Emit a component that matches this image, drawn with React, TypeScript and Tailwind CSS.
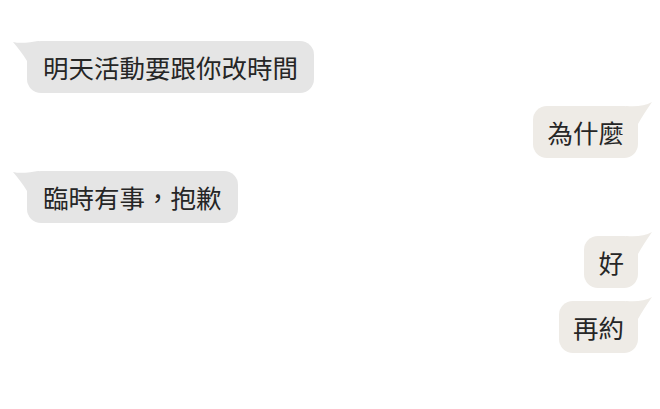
import React from 'react';

interface Message {
  id: number;
  text: string;
  mine: boolean;
}

const messages: Message[] = [
  { id: 1, text: '明天活動要跟你改時間', mine: false },
  { id: 2, text: '為什麼', mine: true },
  { id: 3, text: '臨時有事，抱歉', mine: false },
  { id: 4, text: '好', mine: true },
  { id: 5, text: '再約', mine: true },
];

function LeftTail() {
  return (
    <svg
      className="absolute left-[-16px] top-[-2px] w-[30px] h-[26px]"
      viewBox="-16 -2 30 26"
      fill="#e5e5e5"
    >
      <path d="M -14 1 C -6 3, 4 1, 12 0 L 12 20 L 0 20 C -4 13, -9 7, -14 1 Z" />
    </svg>
  );
}

function RightTail() {
  return (
    <svg
      className="absolute right-[-16px] top-[-6px] w-[30px] h-[26px]"
      viewBox="-14 -6 30 26"
      fill="#eeebe6"
    >
      <path d="M 14 -4 C 7 0, -2 1, -12 0 L -12 18 L 0 18 C 4 11, 9 3, 14 -4 Z" />
    </svg>
  );
}

function Bubble({ message }: { message: Message }) {
  return (
    <div className={`flex ${message.mine ? 'justify-end' : 'justify-start'}`}>
      <div
        className={`relative h-[52px] flex items-center rounded-[14px] text-[25.5px] leading-none text-[#262626] ${
          message.mine ? 'bg-[#eeebe6] px-[14px]' : 'bg-[#e5e5e5] px-[16px]'
        }`}
      >
        {message.mine ? <RightTail /> : <LeftTail />}
        <span className="relative">{message.text}</span>
      </div>
    </div>
  );
}

export default function App() {
  return (
    <div
      className="w-[660px] h-[409px] bg-white overflow-hidden pt-[41px] pl-[27px] pr-[22px] flex flex-col gap-[13px]"
      style={{ fontFamily: '"Noto Sans CJK TC", "Noto Sans", sans-serif' }}
    >
      {messages.map(m => (
        <Bubble key={m.id} message={m} />
      ))}
    </div>
  );
}
